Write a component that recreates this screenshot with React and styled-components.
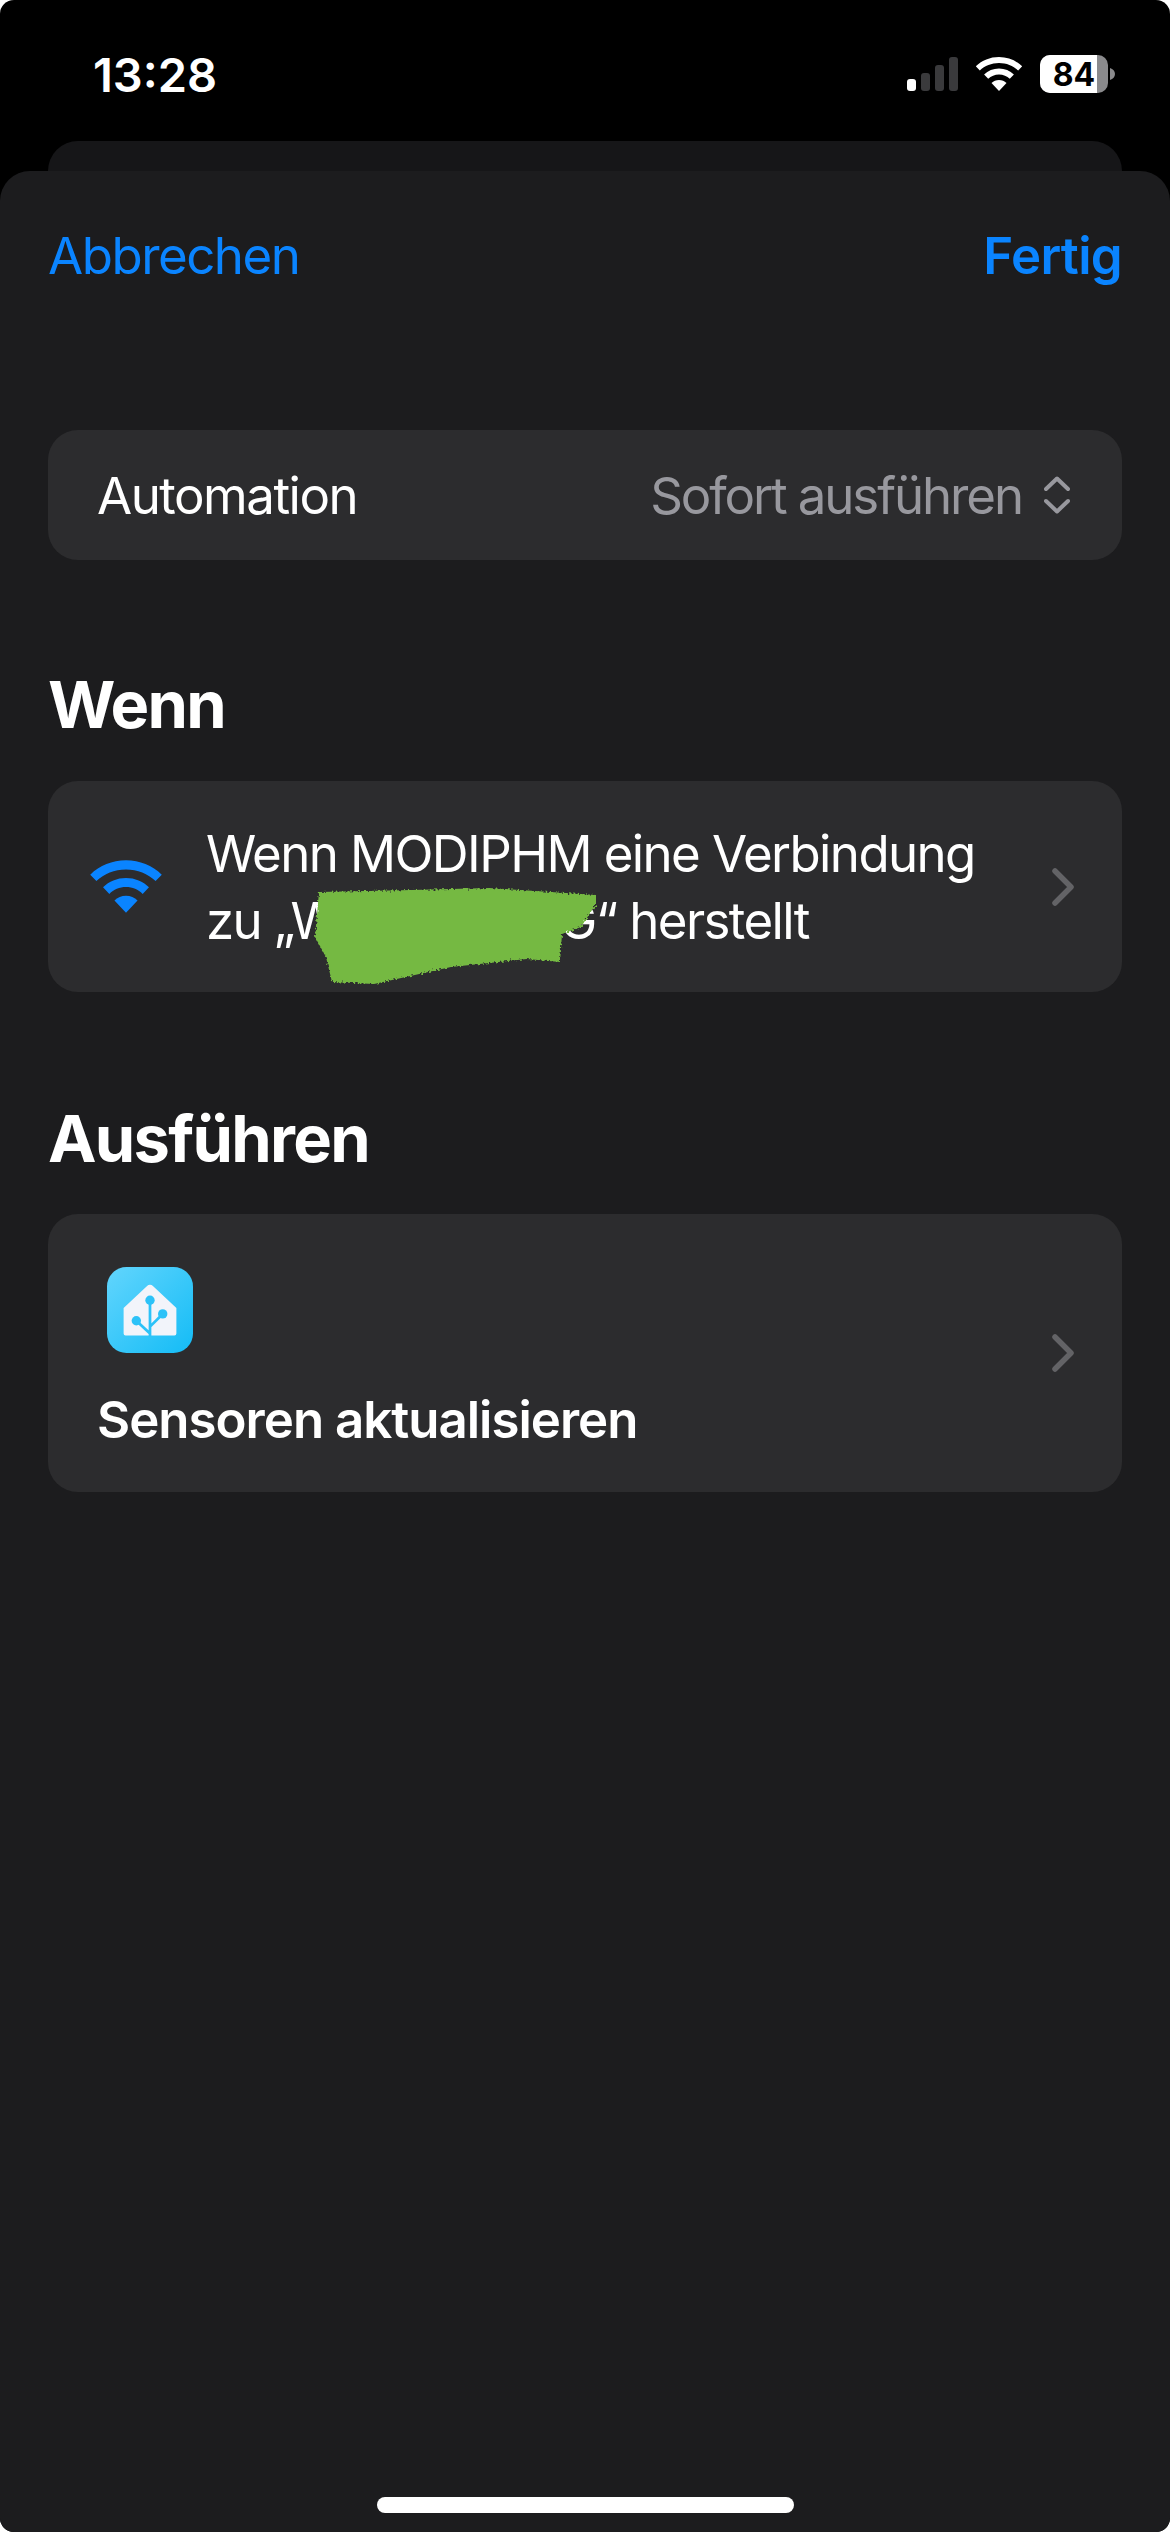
import styled, { createGlobalStyle } from 'styled-components';

const GlobalStyle = createGlobalStyle`
  html, body {
    margin: 0;
    padding: 0;
    background: #fff;
  }
  * {
    box-sizing: border-box;
  }
`;

const Screen = styled.div`
  width: 1170px;
  height: 2532px;
  overflow: hidden;
  display: flex;
  flex-direction: column;
  background: #000;
  border-radius: 14px;
  font-family: Inter, "Liberation Sans", sans-serif;
  color: #fff;
`;

const StatusBar = styled.div`
  height: 141px;
  flex: none;
  display: flex;
  justify-content: space-between;
  align-items: flex-start;
  padding: 50px 55px 0 93px;
`;

const Time = styled.div`
  font-size: 47px;
  line-height: 50px;
  font-weight: 600;
  letter-spacing: 0;
`;

const StatusIcons = styled.div`
  display: flex;
  align-items: center;
  gap: 17px;
  padding-top: 5px;
`;

const PeekCard = styled.div`
  height: 30px;
  flex: none;
  margin: 0 48px;
  background: #161618;
  border-radius: 30px 30px 0 0;
`;

const Sheet = styled.div`
  flex: 1;
  display: flex;
  flex-direction: column;
  position: relative;
  background: #1c1c1e;
  border-radius: 30px 30px 0 0;
  padding: 0 48px;
`;

const NavBar = styled.div`
  display: flex;
  justify-content: space-between;
  align-items: center;
  height: 60px;
  margin-top: 55px;
  margin-bottom: 144px;
`;

const NavLink = styled.span`
  font-size: 51px;
  line-height: 60px;
  letter-spacing: ${(p) => (p.$bold ? '-0.7px' : '-1.5px')};
  color: #0a84ff;
  font-weight: ${(p) => (p.$bold ? 600 : 400)};
`;

const Card = styled.div`
  background: #2c2c2e;
  border-radius: 30px;
  display: flex;
  align-items: center;
  justify-content: space-between;
  height: ${(p) => p.$height}px;
`;

const PickerCard = styled(Card)`
  padding: 0 52px 0 49px;
`;

const Label = styled.span`
  font-size: 51px;
  letter-spacing: -1.5px;
`;

const PickerValue = styled.div`
  display: flex;
  align-items: center;
  gap: 22px;
  font-size: 51px;
  letter-spacing: -2.1px;
  color: #98989e;
`;

const SectionTitle = styled.h2`
  margin: ${(p) => p.$top}px 0 ${(p) => p.$bottom}px;
  font-size: 65px;
  line-height: 80px;
  font-weight: 700;
  letter-spacing: -1.7px;
`;

const TriggerCard = styled(Card)`
  position: relative;
  padding: 0 47px 0 41px;
`;

const TriggerRow = styled.div`
  display: flex;
  align-items: center;
  gap: 43px;
`;

const TriggerText = styled.div`
  font-size: 51px;
  line-height: 67px;
  letter-spacing: -1.6px;
`;

const Redacted = styled.span`
  display: inline-block;
  width: 220px;
`;

const Smear = styled.svg`
  position: absolute;
  left: 262px;
  top: 101px;
  width: 300px;
  height: 110px;
`;

const ActionCard = styled(Card)`
  padding: 0 47px 0 49px;
`;

const ActionBody = styled.div`
  display: flex;
  flex-direction: column;
  align-items: flex-start;
  gap: 38px;
  padding-top: 10px;
`;

const AppTile = styled.svg`
  width: 86px;
  height: 86px;
  margin-left: 10px;
  display: block;
`;

const ActionName = styled.span`
  font-size: 51px;
  font-weight: 600;
  line-height: 58px;
  letter-spacing: -1px;
`;

const HomeIndicator = styled.div`
  position: absolute;
  left: 377px;
  bottom: 19px;
  width: 417px;
  height: 16px;
  border-radius: 8px;
  background: #fff;
`;

const Signal = () => (
  <svg width="51" height="34" viewBox="0 0 51 34">
    <rect x="0" y="22" width="9" height="12" rx="3" fill="#fff" />
    <rect x="14" y="16" width="9" height="18" rx="3" fill="#3a3a3c" />
    <rect x="28" y="8" width="9" height="26" rx="3" fill="#3a3a3c" />
    <rect x="42" y="0" width="9" height="34" rx="3" fill="#3a3a3c" />
  </svg>
);

const Wifi = ({ width, height, color }) => (
  <svg width={width} height={height} viewBox="0 0 48 34" fill={color}>
    <path d="M24 0C15 0 7 3.400 .8 9.300L4.800 13.500C9.800 8.800 16.500 6 24 6s14.200 2.800 19.200 7.500l4-4.200C41 3.400 33 0 24 0Z" />
    <path d="M24 11.500c-5.800 0-11 2.200-14.900 6l4.100 4.300c2.800-2.700 6.600-4.400 10.800-4.400s8 1.700 10.800 4.400l4.100-4.300C35 13.700 29.800 11.500 24 11.500Z" />
    <path d="M24 23c-2.900 0-5.500 1.100-7.500 3L24 34l7.500-8c-2-1.900-4.600-3-7.500-3Z" />
  </svg>
);

const Battery = () => (
  <svg width="75" height="38" viewBox="0 0 75 38">
    <rect x="0" y="0" width="68" height="38" rx="10" fill="#8a8a8c" />
    <path d="M10 0H57V38H10A10 10 0 0 1 0 28V10A10 10 0 0 1 10 0Z" fill="#fff" />
    <path d="M70 13c3 1 5 3 5 6s-2 5-5 6Z" fill="#8a8a8c" />
    <text x="34" y="31" textAnchor="middle" fontFamily="Inter, sans-serif" fontSize="32" fontWeight="700" fill="#000">84</text>
  </svg>
);

const Chevron = () => (
  <svg width="24" height="38" viewBox="0 0 24 38" fill="none">
    <path d="M4 3L20 19L4 35" stroke="#636366" strokeWidth="5.500" strokeLinecap="round" strokeLinejoin="round" />
  </svg>
);

const UpDown = () => (
  <svg width="26" height="38" viewBox="0 0 26 38" fill="none">
    <path d="M2 13L13 2.500L24 13M2 25L13 35.500L24 25" stroke="#98989e" strokeWidth="4" strokeLinecap="round" strokeLinejoin="round" />
  </svg>
);

const HomeTile = () => (
  <AppTile viewBox="0 0 88 88">
    <defs>
      <linearGradient id="tile" x1="0" y1="0" x2="1" y2="1">
        <stop offset="0" stopColor="#62d5fd" />
        <stop offset="1" stopColor="#14bcf6" />
      </linearGradient>
    </defs>
    <rect width="88" height="88" rx="20" fill="url(#tile)" />
    <path d="M41 19.500a4 4 0 0 1 6 0L71 42v26a2 2 0 0 1-2 2H19a2 2 0 0 1-2-2V42Z" fill="#f2f4fa" />
    <g stroke="#2cc2f8" strokeWidth="2.800" fill="#2cc2f8">
      <path d="M44 34V71M30 55L44 68M57 48L44 61" fill="none" />
      <circle cx="44" cy="34" r="4.800" stroke="none" />
      <circle cx="30" cy="55" r="4.800" stroke="none" />
      <circle cx="57" cy="48" r="4.800" stroke="none" />
    </g>
  </AppTile>
);

// hand-painted green scribble over the network name, with frayed edges
const Scribble = () => (
  <Smear viewBox="0 0 300 110">
    <defs>
      <filter id="fray" x="-5%" y="-5%" width="110%" height="110%">
        <feTurbulence type="fractalNoise" baseFrequency="0.5" numOctaves="2" seed="4" />
        <feDisplacementMap in="SourceGraphic" scale="6" />
      </filter>
    </defs>
    <g filter="url(#fray)">
      <path d="M9 10L102 8L179 6L286 13L286 22L271 45L252 52L250 80L217 77L141 85L64 102L22 100L16 75L5 55Z" fill="#74b943" />
    </g>
  </Smear>
);

const App = () => {
  return (
    <Screen>
      <GlobalStyle />
      <StatusBar>
        <Time>13:28</Time>
        <StatusIcons>
          <Signal />
          <Wifi width={48} height={34} color="#fff" />
          <Battery />
        </StatusIcons>
      </StatusBar>
      <PeekCard />
      <Sheet>
        <NavBar>
          <NavLink>Abbrechen</NavLink>
          <NavLink $bold>Fertig</NavLink>
        </NavBar>
        <PickerCard $height={130}>
          <Label>Automation</Label>
          <PickerValue>
            Sofort ausführen
            <UpDown />
          </PickerValue>
        </PickerCard>
        <SectionTitle $top={105} $bottom={36}>Wenn</SectionTitle>
        <TriggerCard $height={211}>
          <TriggerRow>
            <Wifi width={74} height={53} color="#0a84ff" />
            <TriggerText>
              Wenn MODIPHM eine Verbindung
              <br />
              zu „W<Redacted />G“ herstellt
            </TriggerText>
          </TriggerRow>
          <Chevron />
          <Scribble />
        </TriggerCard>
        <SectionTitle $top={107} $bottom={35}>Ausführen</SectionTitle>
        <ActionCard $height={278}>
          <ActionBody>
            <HomeTile />
            <ActionName>Sensoren aktualisieren</ActionName>
          </ActionBody>
          <Chevron />
        </ActionCard>
        <HomeIndicator />
      </Sheet>
    </Screen>
  );
};

export default App;
